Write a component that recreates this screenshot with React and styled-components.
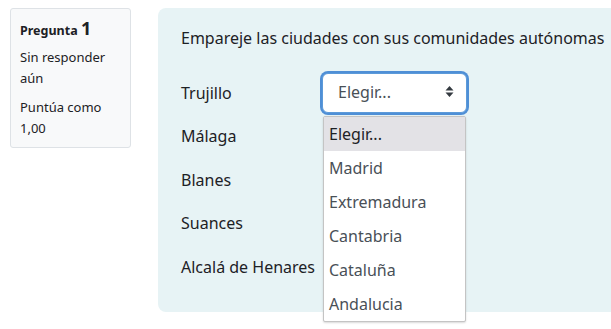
import React from "react";
import styled, { createGlobalStyle } from "styled-components";

const Global = createGlobalStyle`
  html, body { margin: 0; padding: 0; background: #fff; }
  body { font-family: "Noto Sans", "Open Sans", sans-serif; color: #1d2125; overflow: hidden; }
`;

const Page = styled.div`
  display: flex;
  align-items: flex-start;
  gap: 27px;
  padding: 8px 0 0 10px;
  width: 611px;
  height: 329px;
  box-sizing: border-box;
  overflow: hidden;
`;

const Info = styled.div`
  box-sizing: border-box;
  flex-shrink: 0;
  width: 121px;
  height: 140px;
  background: #f8f9fa;
  border: 1px solid #dee2e6;
  border-radius: 3px;
  padding: 9px 9px;
  font-size: 13px;
  line-height: 21px;
`;

const QTitle = styled.div`
  font-weight: 700;
  font-size: 12.5px;
  margin-bottom: 6px;
  span { font-size: 18px; }
`;

const InfoLine = styled.div`
  margin-bottom: 8px;
`;

const Panel = styled.div`
  box-sizing: border-box;
  flex-shrink: 0;
  width: 520px;
  height: 304px;
  background: #e7f3f5;
  border-radius: 8px;
  padding: 18px 23px;
  font-size: 16px;
`;

const Prompt = styled.div`
  line-height: 24px;
  margin-bottom: 21px;
`;

const Row = styled.div`
  display: grid;
  grid-template-columns: 141px 145px;
  align-items: center;
  height: 43.5px;
  position: relative;
`;

const Label = styled.div``;

const Select = styled.div`
  box-sizing: border-box;
  height: 40px;
  background: #fff;
  border: 1px solid ${p => (p.$focus ? "#5c9ad9" : "#8f959e")};
  box-shadow: ${p => (p.$focus ? "0 0 0 2px #4f8fd6" : "none")};
  border-radius: 6px;
  display: flex;
  align-items: center;
  justify-content: space-between;
  padding: 0 12px 2px 15px;
  color: #495057;
  visibility: ${p => (p.$hidden ? "hidden" : "visible")};
`;

const List = styled.div`
  position: absolute;
  left: 142px;
  top: 45px;
  width: 143px;
  box-sizing: border-box;
  background: #fff;
  border: 1px solid #c4c4c4;
  border-radius: 2px;
  box-shadow: 0 1px 2px rgba(0,0,0,0.15);
  z-index: 2;
`;

const Option = styled.div`
  height: 34px;
  line-height: 34px;
  padding-left: 5px;
  color: ${p => (p.$active ? "#1d2125" : "#495057")};
  background: ${p => (p.$active ? "#e3e2e6" : "transparent")};
`;

const Arrows = () => (
  <svg width="9" height="13" viewBox="0 0 9 13">
    <path d="M4.5 1 L8.5 5.5 H0.5 Z M4.5 12 L8.5 7.5 H0.5 Z" fill="#343a40" />
  </svg>
);

const cities = ["Trujillo", "Málaga", "Blanes", "Suances", "Alcalá de Henares"];
const options = ["Elegir...", "Madrid", "Extremadura", "Cantabria", "Cataluña", "Andalucia"];

export default function App() {
  return (
    <>
      <Global />
      <Page>
        <Info>
          <QTitle>Pregunta <span>1</span></QTitle>
          <InfoLine>Sin responder aún</InfoLine>
          <InfoLine>Puntúa como 1,00</InfoLine>
        </Info>
        <Panel>
          <Prompt>Empareje las ciudades con sus comunidades autónomas</Prompt>
          {cities.map((c, i) => (
            <Row key={c}>
              <Label>{c}</Label>
              <Select $focus={i === 0} $hidden={i !== 0}>
                <span>Elegir...</span>
                <Arrows />
              </Select>
              {i === 0 && (
                <List>
                  {options.map((o, j) => (
                    <Option key={o} $active={j === 0}>{o}</Option>
                  ))}
                </List>
              )}
            </Row>
          ))}
        </Panel>
      </Page>
    </>
  );
}
